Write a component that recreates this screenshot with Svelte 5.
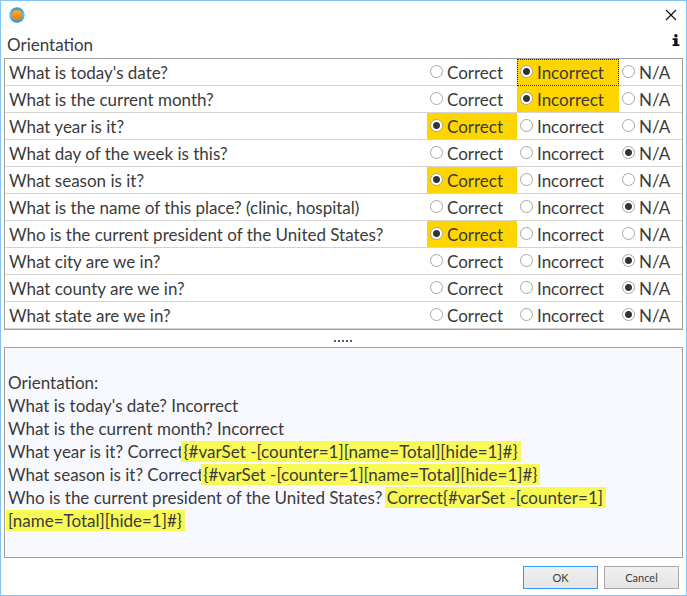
<script>
  const choices = ['Correct', 'Incorrect', 'N/A'];

  let questions = $state([
    { text: "What is today's date?", answer: 'Incorrect' },
    { text: 'What is the current month?', answer: 'Incorrect' },
    { text: 'What year is it?', answer: 'Correct' },
    { text: 'What day of the week is this?', answer: 'N/A' },
    { text: 'What season is it?', answer: 'Correct' },
    { text: 'What is the name of this place? (clinic, hospital)', answer: 'N/A' },
    { text: 'Who is the current president of the United States?', answer: 'Correct' },
    { text: 'What city are we in?', answer: 'N/A' },
    { text: 'What county are we in?', answer: 'N/A' },
    { text: 'What state are we in?', answer: 'N/A' }
  ]);

  const counter = '{#varSet -[counter=1]';
  const total = '[name=Total][hide=1]#}';
</script>

<main class="dialog">
  <header class="titlebar">
    <svg class="logo" width="16" height="16" viewBox="0 0 16 16" aria-hidden="true">
      <defs>
        <linearGradient id="ring" x1="0" y1="0" x2="0" y2="1">
          <stop offset="0" stop-color="#2d9bd8" />
          <stop offset=".5" stop-color="#63c3ee" />
          <stop offset="1" stop-color="#2d8fd0" />
        </linearGradient>
        <linearGradient id="core" x1="0" y1="0" x2="0" y2="1">
          <stop offset="0" stop-color="#ffb320" />
          <stop offset="1" stop-color="#f97808" />
        </linearGradient>
      </defs>
      <circle cx="8" cy="8" r="7.7" fill="url(#ring)" />
      <rect x="3.5" y="3.2" width="9" height="9.4" rx="3" fill="url(#core)" stroke="#d88a45" stroke-width=".8" />
    </svg>
    <button class="close" aria-label="Close">
      <svg width="12" height="12" viewBox="0 0 12 12"><path d="M1 1 11 11M11 1 1 11" stroke="#111" stroke-width="1.2" /></svg>
    </button>
  </header>

  <div class="heading">
    <h1>Orientation</h1>
    <button class="info" aria-label="Information">
      <svg width="8" height="12" viewBox="0 0 8 12"><circle cx="3.9" cy="1.7" r="1.7" fill="#111" /><path d="M.6 4.2H5.6V10.2H7.4V12H.6V10.2H2.2V6H.6Z" fill="#111" /></svg>
    </button>
  </div>

  <table>
    <tbody>
      {#each questions as question, row}
        <tr>
          <th scope="row">{question.text}</th>
          {#each choices as choice}
            <td
              class={choice === 'Correct' ? 'correct' : choice === 'Incorrect' ? 'incorrect' : 'na'}
              class:chosen={question.answer === choice && choice !== 'N/A'}
              class:current={row === 0 && choice === 'Incorrect'}
            >
              <label>
                <input type="radio" name="question-{row}" value={choice} bind:group={question.answer} />
                <span>{choice}</span>
              </label>
            </td>
          {/each}
        </tr>
      {/each}
    </tbody>
  </table>

  <div class="splitter">
    <i></i><i></i><i></i><i></i><i></i>
  </div>

  <section class="preview">
    <p>Orientation:</p>
    <p>What is today's date? Incorrect</p>
    <p>What is the current month? Incorrect</p>
    <p>What year is it? Correct<mark>{counter}{total}</mark></p>
    <p>What season is it? Correct<mark>{counter}{total}</mark></p>
    <p>Who is the current president of the United States? <mark>Correct{counter}</mark><br /><mark>{total}</mark></p>
  </section>

  <footer>
    <button class="action primary">OK</button>
    <button class="action">Cancel</button>
  </footer>
</main>

<style>
  :global(body) {
    margin: 0;
  }
  .dialog {
    box-sizing: border-box;
    min-height: 100vh;
    display: flex;
    flex-direction: column;
    padding: 0 3px 6px;
    border: 1px solid #84c3f8;
    background: #fff;
    color: #3b3b3b;
    font: 17px/23px Lato, Carlito, Calibri, sans-serif;
  }
  button {
    font-family: inherit;
    color: inherit;
  }
  .titlebar {
    display: flex;
    justify-content: space-between;
    align-items: center;
    height: 28px;
    padding: 0 5px;
  }
  .close,
  .info {
    display: flex;
    padding: 0;
    border: 0;
    background: none;
  }
  .close {
    padding: 1px;
  }
  .heading {
    display: flex;
    justify-content: space-between;
    align-items: flex-start;
    height: 29px;
    padding: 0 3px;
    box-sizing: border-box;
  }
  h1 {
    margin: 0;
    padding-top: 4px;
    font-size: 17px;
    line-height: 23px;
    font-weight: 400;
  }
  .info {
    padding-top: 5px;
  }
  table {
    width: 100%;
    table-layout: fixed;
    border-spacing: 0;
    border: 1px solid #a0a0a0;
  }
  th,
  td {
    box-sizing: border-box;
    height: 27px;
    padding: 0;
    border-bottom: 1px solid #d4d4d4;
    font-weight: 400;
    text-align: left;
    background-clip: padding-box;
  }
  th {
    padding-left: 4px;
  }
  .correct {
    width: 90px;
  }
  .incorrect {
    width: 102px;
  }
  .na {
    width: 63px;
  }
  .chosen {
    background-color: #ffd500;
  }
  .current {
    outline: 1px dotted #222;
    outline-offset: -1px;
  }
  label {
    display: flex;
    gap: 4px;
    height: 26px;
    padding-left: 3px;
  }
  label span {
    line-height: 28px;
  }
  input {
    appearance: none;
    box-sizing: border-box;
    flex: none;
    width: 13px;
    height: 13px;
    margin: 6px 0 0;
    border: 1px solid #a6a6a6;
    border-radius: 50%;
    background: #fff;
  }
  input:checked {
    background: radial-gradient(circle, #333 3px, #fff 4px);
  }
  .splitter {
    display: flex;
    justify-content: center;
    align-items: center;
    gap: 2px;
    height: 17px;
    padding: 4px 2px 0 0;
    box-sizing: border-box;
  }
  .splitter i {
    width: 2px;
    height: 2px;
    background: #5a5a66;
  }
  .preview {
    flex: 1;
    padding: 23px 3px;
    border: 1px solid #a0a0a0;
    background: #f8f9ff;
  }
  .preview p {
    margin: 0;
  }
  mark {
    margin-left: -2px;
    padding: 0 3px 0 2px;
    background: #f9f955;
    color: inherit;
  }
  footer {
    display: flex;
    justify-content: flex-end;
    gap: 6px;
    padding: 8px 4px 0 0;
  }
  .action {
    width: 75px;
    height: 23px;
    padding: 0;
    border: 1px solid #a8a8a8;
    background: linear-gradient(#f0f0f0, #e4e4e4);
    font-size: 11px;
  }
  .primary {
    border-color: #3399ff;
  }
</style>
